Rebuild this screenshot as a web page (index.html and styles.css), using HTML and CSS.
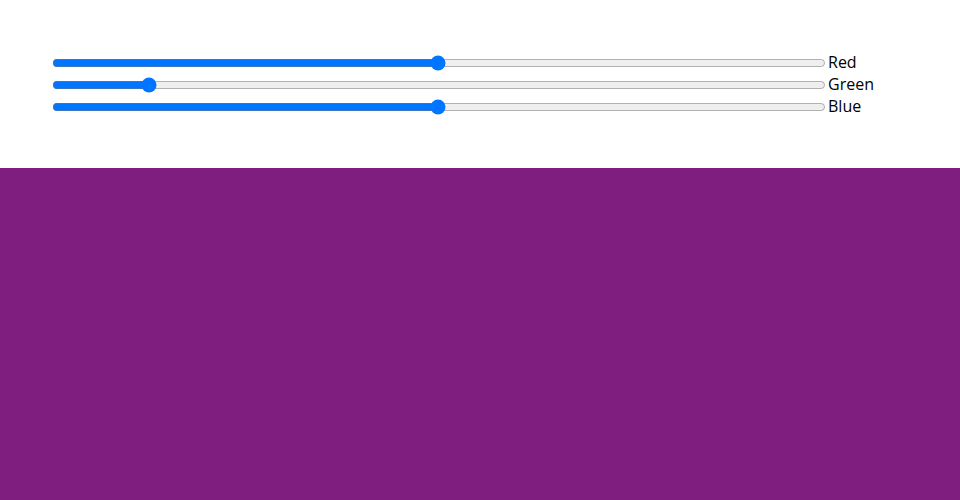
FILE: index.html
```html
<!DOCTYPE html>
<html lang="en">
  <head>
    <meta charset="UTF-8">
    <title>Color Mixer</title>
    <link rel="stylesheet" href="styles.css">
  </head>
  <body>
    <div class="controls">
      <label class="row">
        <input type="range" min="0" max="255" value="127">
        <span>Red</span>
      </label>
      <label class="row">
        <input type="range" min="0" max="255" value="30">
        <span>Green</span>
      </label>
      <label class="row">
        <input type="range" min="0" max="255" value="127">
        <span>Blue</span>
      </label>
    </div>
    <div class="swatch"></div>
  </body>
</html>
```

FILE: styles.css
```css
body {
  margin: 0;
  font-family: 'Open Sans', sans-serif;
  font-size: 16px;
  color: #000;
}

.controls {
  padding: 52px 50px 50px;
  display: flex;
  flex-direction: column;
}

.row {
  display: flex;
  align-items: center;
  height: 22px;
  line-height: 22px;
}

.row input {
  width: 774px;
  margin: 0 2px;
}

.row span {
  position: relative;
  top: -1px;
}

.swatch {
  background: rgb(127, 30, 127);
  height: 332px;
}
```
